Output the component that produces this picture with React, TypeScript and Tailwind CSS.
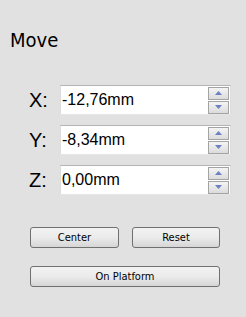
import React from "react";

function Spin() {
  const btn =
    "w-[21px] h-[13px] border border-[#a3a3a3] bg-gradient-to-b from-[#f4f4f4] to-[#dcdcdc] flex items-center justify-center";
  return (
    <div className="flex flex-col gap-[1px] mr-[1px]">
      <div className={btn}>
        <svg width="7" height="4" viewBox="0 0 7 4">
          <polygon points="0,4 7,4 3.5,0" fill="#6b7fc8" />
        </svg>
      </div>
      <div className={btn}>
        <svg width="7" height="4" viewBox="0 0 7 4">
          <polygon points="0,0 7,0 3.5,4" fill="#6b7fc8" />
        </svg>
      </div>
    </div>
  );
}

function Row({ label, value }: { label: string; value: string }) {
  return (
    <div className="flex items-center h-[30px]">
      <div
        className="w-[31px] ml-[29px] text-[20px] text-black leading-none"
        style={{ fontFamily: '"Liberation Sans", Arial, sans-serif' }}
      >
        {label}
      </div>
      <div className="w-[171px] h-[30px] bg-white border-t border-t-[#b4b4b4] border-x border-x-[#dcdcdc] border-b border-b-[#e6e6e6] flex items-center justify-between">
        <span
          className="pl-[1px] text-[16px] text-black leading-none"
          style={{ fontFamily: '"Liberation Sans", Arial, sans-serif' }}
        >
          {value}
        </span>
        <Spin />
      </div>
    </div>
  );
}

function Btn({ children, w }: { children: React.ReactNode; w: string }) {
  return (
    <button
      className={`${w} h-[21px] rounded-[3px] border border-[#707070] bg-gradient-to-b from-[#f2f2f2] via-[#ebebeb] to-[#d6d6d6] text-[11px] text-black leading-none flex items-center justify-center`}
      style={{ fontFamily: '"DejaVu Sans Condensed", "DejaVu Sans", sans-serif' }}
    >
      {children}
    </button>
  );
}

export default function App() {
  return (
    <div className="w-[246px] h-[317px] bg-[#e1e1e1] overflow-hidden">
      <div
        className="pl-[10px] pt-[29px] text-[20px] leading-[22px] text-black"
        style={{ fontFamily: '"DejaVu Sans Condensed", "DejaVu Sans", sans-serif' }}
      >
        Move
      </div>
      <div className="mt-[34px] flex flex-col gap-[10px]">
        <Row label="X:" value="-12,76mm" />
        <Row label="Y:" value="-8,34mm" />
        <Row label="Z:" value="0,00mm" />
      </div>
      <div className="mt-[32px] ml-[30px] flex gap-[13px]">
        <Btn w="w-[89px]">Center</Btn>
        <Btn w="w-[88px]">Reset</Btn>
      </div>
      <div className="mt-[18px] ml-[30px]">
        <Btn w="w-[190px]">On Platform</Btn>
      </div>
    </div>
  );
}
